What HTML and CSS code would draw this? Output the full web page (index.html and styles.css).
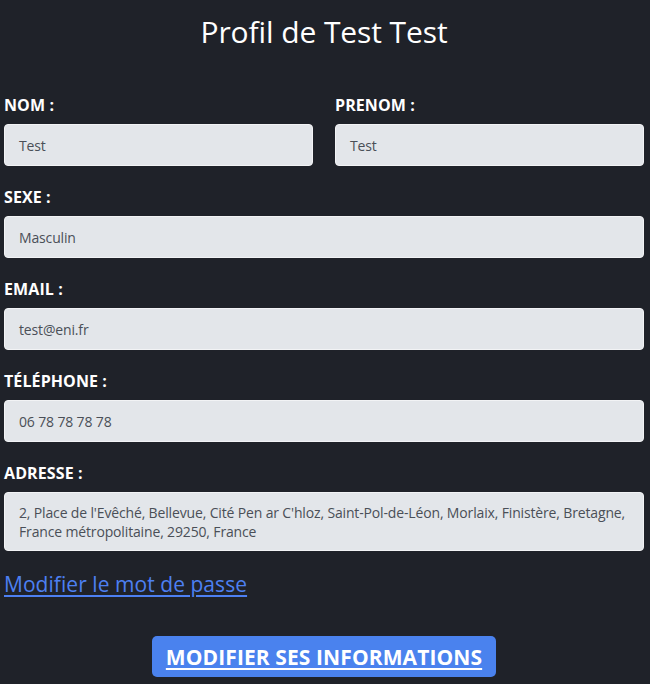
FILE: index.html
```html
<!DOCTYPE html>
<html lang="fr">
<head>
<meta charset="utf-8">
<title>Profil</title>
<link rel="stylesheet" href="styles.css">
</head>
<body>
<main class="page">
  <h1 class="title">Profil de Test Test</h1>
  <form class="form">
    <div class="row two">
      <div class="field">
        <label class="label">NOM :</label>
        <div class="input">Test</div>
      </div>
      <div class="field">
        <label class="label">PRENOM :</label>
        <div class="input">Test</div>
      </div>
    </div>
    <div class="field">
      <label class="label">SEXE :</label>
      <div class="input">Masculin</div>
    </div>
    <div class="field">
      <label class="label">EMAIL :</label>
      <div class="input">test@eni.fr</div>
    </div>
    <div class="field">
      <label class="label">TÉLÉPHONE :</label>
      <div class="input">06 78 78 78 78</div>
    </div>
    <div class="field">
      <label class="label">ADRESSE :</label>
      <div class="input multi">2, Place de l'Evêché, Bellevue, Cité Pen ar C'hloz, Saint-Pol-de-Léon, Morlaix, Finistère, Bretagne, France métropolitaine, 29250, France</div>
    </div>
    <a class="link" href="#">Modifier le mot de passe</a>
    <div class="actions">
      <a class="btn" href="#">MODIFIER SES INFORMATIONS</a>
    </div>
  </form>
</main>
</body>
</html>
```
FILE: styles.css
```css
html, body {
  margin: 0;
  padding: 0;
  background: #1f2229;
}
body {
  font-family: "Open Sans", "Noto Sans", sans-serif;
  color: #ffffff;
}
.page {
  padding: 0 6px 0 4px;
}
.title {
  margin: 0;
  padding-top: 12px;
  height: 54px;
  text-align: center;
  font-weight: 400;
  font-size: 30px;
  line-height: 40px;
  letter-spacing: -0.1px;
}
.form {
  display: flex;
  flex-direction: column;
  padding-top: 29px;
}
.row.two {
  display: grid;
  grid-template-columns: 1fr 1fr;
  column-gap: 22px;
}
.field {
  display: flex;
  flex-direction: column;
  margin-bottom: 21px;
}
.label {
  font-weight: 700;
  font-size: 16px;
  line-height: 20px;
  height: 20px;
  margin-bottom: 9px;
  letter-spacing: 0.1px;
}
.input {
  box-sizing: border-box;
  height: 42px;
  background: #e3e6ea;
  border: 1px solid #f2f3f5;
  border-radius: 4px;
  padding: 0 14px;
  display: flex;
  align-items: center;
  color: #4a4f57;
  font-size: 14px;
  letter-spacing: -0.15px;
}
.input.multi {
  height: 59px;
  line-height: 19px;
  padding-top: 1px;
}
.link {
  color: #4d80f2;
  font-size: 21px;
  line-height: 30px;
  margin-top: -3px;
  align-self: flex-start;
  letter-spacing: 0.05px;
  text-decoration-thickness: 2px;
  text-underline-offset: 3px;
}
.actions {
  display: flex;
  justify-content: center;
  padding-top: 37px;
}
.btn {
  box-sizing: border-box;
  height: 41px;
  width: 344px;
  display: flex;
  align-items: center;
  justify-content: center;
  background: #4a82ee;
  border-radius: 5px;
  color: #ffffff;
  font-weight: 700;
  font-size: 21px;
  letter-spacing: 0.1px;
  text-decoration-thickness: 2px;
  text-underline-offset: 3px;
}
```
